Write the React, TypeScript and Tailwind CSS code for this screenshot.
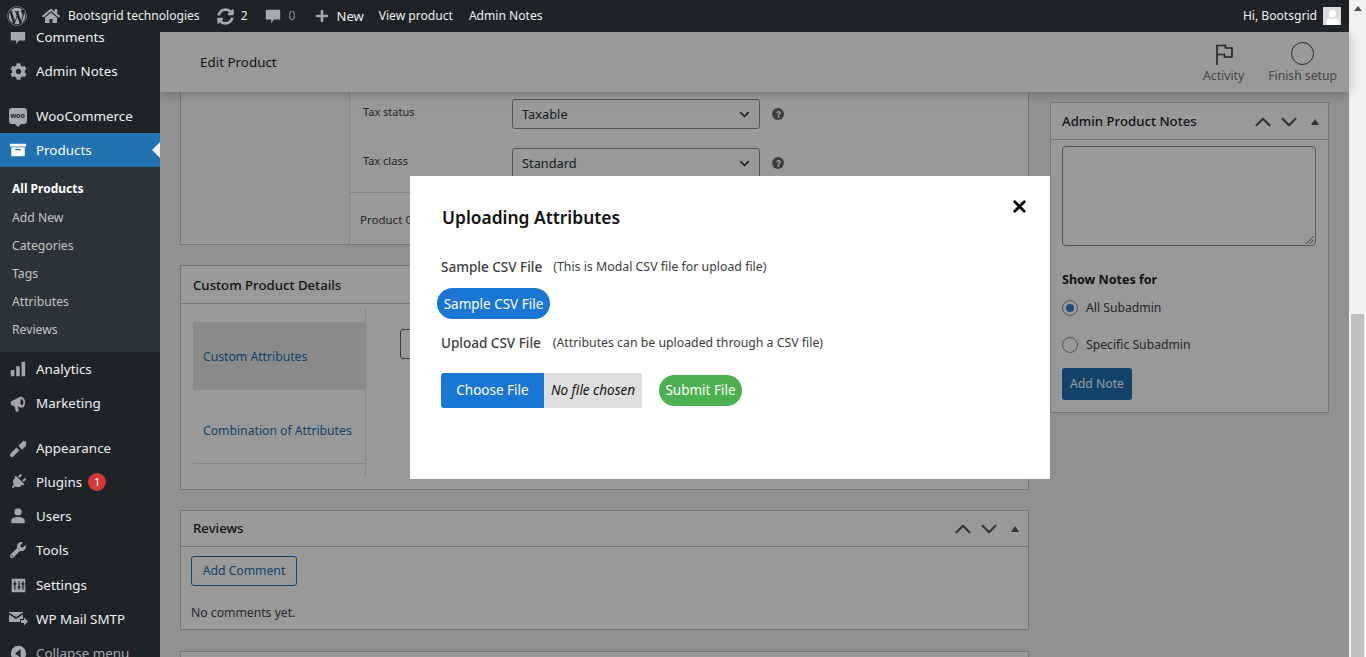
import React from "react";
import { FaWordpress, FaHome, FaSyncAlt, FaPlus, FaCog, FaPlug, FaUser, FaWrench, FaQuestion } from "react-icons/fa";
import { ChevronUp, ChevronDown, ChevronDown as SelectArrow, X } from "lucide-react";

const CommentIcon = ({ c = "w-[18px] h-[18px]" }: { c?: string }) => (
  <svg viewBox="0 0 20 20" className={c} fill="currentColor"><path d="M3 3h14c.6 0 1 .4 1 1v9c0 .6-.4 1-1 1h-6l-3 4v-4H3c-.6 0-1-.4-1-1V4c0-.6.4-1 1-1z" /></svg>
);

const Row = ({ icon, label, extra }: { icon: React.ReactNode; label: string; extra?: React.ReactNode }) => (
  <div className="h-[34px] flex items-center text-[#f0f0f1] shrink-0">
    <span className="w-9 flex justify-center text-[#a3a7ab] shrink-0">{icon}</span>
    <span>{label}</span>
    {extra}
  </div>
);

const BoxControls = () => (
  <div className="flex items-center text-[#50575e]">
    <ChevronUp size={26} strokeWidth={1.9} />
    <ChevronDown size={26} strokeWidth={1.9} />
    <span className="w-0 h-0 border-x-[4px] border-x-transparent border-b-[6px] border-b-[#50575e] ml-[9px]" />
  </div>
);

const SelectBox = ({ value }: { value: string }) => (
  <div className="w-[248px] h-[30px] border border-[#8c8f94] rounded-[3px] bg-white flex items-center justify-between pl-[9px] pr-[7px] text-[12.8px] text-[#2c3338]">
    <span className="pt-[1px]">{value}</span>
    <SelectArrow size={15} strokeWidth={2.4} className="text-[#2c3338]" />
  </div>
);

const Help = () => (
  <span className="w-3 h-3 rounded-full bg-[#666] text-white flex items-center justify-center ml-3">
    <FaQuestion size={7} />
  </span>
);

export default function App() {
  return (
    <div className="flex h-[657px] w-full overflow-hidden font-['Noto_Sans',sans-serif] text-[12.2px] bg-[#f1f1f1]">
      <div className="w-[1349px] shrink-0 flex flex-col">
        {/* admin bar */}
        <div className="h-8 shrink-0 bg-[#1d2327] text-[#f0f0f1] flex items-center relative z-30 text-[12.1px]">
          <span className="w-[34px] flex justify-center text-[#a7aaad]"><FaWordpress size={20} /></span>
          <span className="w-[34px] flex justify-center text-[#a7aaad]"><FaHome size={18} /></span>
          <span className="pt-[1px]">Bootsgrid technologies</span>
          <span className="ml-[17px] text-[#a7aaad]"><FaSyncAlt size={17} /></span>
          <span className="ml-[7px] pt-[1px]">2</span>
          <span className="ml-[16px] text-[#a7aaad]"><CommentIcon /></span>
          <span className="ml-[7px] pt-[1px] text-[#8c8f94]">0</span>
          <span className="ml-[19px] text-[#a7aaad]"><FaPlus size={14} /></span>
          <span className="ml-[8px] pt-[1px] text-[13px]">New</span>
          <span className="ml-[15px] pt-[1px]">View product</span>
          <span className="ml-[16px] pt-[1px]">Admin Notes</span>
          <span className="ml-auto pt-[1px]">Hi, Bootsgrid</span>
          <span className="ml-[6px] mr-[8px] w-[18px] h-[18px] bg-[#dcdcde] flex items-end justify-center overflow-hidden text-white">
            <FaUser size={15} />
          </span>
        </div>

        <div className="flex flex-1 min-h-0">
          {/* sidebar */}
          <div className="w-40 shrink-0 bg-[#1d2327] overflow-hidden text-[13.4px] relative z-30">
            <div className="-mt-[12px]">
              <Row icon={<CommentIcon />} label="Comments" />
              <Row icon={<FaCog size={17} />} label="Admin Notes" />
              <div className="h-[11px]" />
              <Row
                icon={
                  <span className="relative -ml-[1px] w-[18px] h-[16px] rounded-[3px] bg-[#a7aaad] text-[#1d2327] text-[7px] font-bold flex items-center justify-center">
                    woo
                    <span className="absolute left-[6px] -bottom-[3px] w-0 h-0 border-x-[3px] border-x-transparent border-t-[3px] border-t-[#a7aaad]" />
                  </span>
                }
                label="WooCommerce"
              />
              <div className="h-[34px] bg-[#2271b1] flex items-center text-white relative">
                <span className="w-9 flex justify-center">
                  <svg viewBox="0 0 20 20" className="w-[18px] h-[18px]" fill="currentColor"><path d="M1 3h18v3H1zM2.5 7h15v10h-15zM7 9v1.200h6V9z" fillRule="evenodd" /></svg>
                </span>
                <span>Products</span>
                <span className="absolute right-0 top-[9px] w-0 h-0 border-y-[8px] border-y-transparent border-r-[8px] border-r-[#f0f0f1]" />
              </div>
              <div className="bg-[#2c3338] h-[185px] pt-[7px] pl-3 text-[12.2px] text-[#c3c4c7]">
                <div className="h-[30px] flex items-center font-bold text-[12px] text-white">All Products</div>
                <div className="h-[28px] flex items-center">Add New</div>
                <div className="h-[28px] flex items-center">Categories</div>
                <div className="h-[28px] flex items-center">Tags</div>
                <div className="h-[28px] flex items-center">Attributes</div>
                <div className="h-[28px] flex items-center">Reviews</div>
              </div>
              <Row
                icon={
                  <svg viewBox="0 0 20 20" className="w-[18px] h-[18px]" fill="currentColor"><path d="M2 11h4v7H2zM8 7h4v11H8zM14 2h4v16h-4z" /></svg>
                }
                label="Analytics"
              />
              <Row
                icon={
                  <svg viewBox="0 0 20 20" className="w-[19px] h-[19px]" fill="currentColor" fillRule="evenodd"><path d="M2 8l10-5c2-1 5 2 5 6s-2.500 6-4.500 5.500L9 13l1.500 5-3 1-2-6.500-2.500-.5c-1 0-1.500-3.500-1-4zM13.500 5.500c-1 0-1.500 1.500-1.500 3.200s.5 3 1.500 3 1.700-1.300 1.700-3-.7-3.200-1.700-3.200z" /></svg>
                }
                label="Marketing"
              />
              <div className="h-[11px]" />
              <Row
                icon={
                  <svg viewBox="0 0 20 20" className="w-[19px] h-[19px]" fill="currentColor"><path d="M10 7l5.500-5.500 1 1.500 1-1 1 3-1 1 .5 1-4.500 4.500zM8 9l3 3-6.500 6.500a2 2 0 0 1-3-3z" /></svg>
                }
                label="Appearance"
              />
              <Row
                icon={<FaPlug size={16} className="rotate-45" />}
                label="Plugins"
                extra={<span className="ml-[6px] w-[18px] h-[18px] rounded-full bg-[#d63638] text-white text-[11px] flex items-center justify-center">1</span>}
              />
              <Row
                icon={
                  <svg viewBox="0 0 20 20" className="w-[18px] h-[18px]" fill="currentColor"><circle cx="10" cy="5.500" r="4" /><path d="M2.500 18v-3c0-2.500 3.500-4 7.500-4s7.500 1.500 7.500 4v3z" /></svg>
                }
                label="Users"
              />
              <Row icon={<FaWrench size={16} />} label="Tools" />
              <div className="h-[1px]" />
              <Row
                icon={
                  <svg viewBox="0 0 20 20" className="w-[17px] h-[17px]" fillRule="evenodd" fill="currentColor"><path d="M2 2h16v16H2zM5 5v2H4v2h1v6h1.400V9h1V7h-1V5zM10 5v6H9v2h1v2h1.400v-2h1v-2h-1V5zM14.500 5v2h-1v2h1v6H16V9h1V7h-1V5z" /></svg>
                }
                label="Settings"
              />
              <Row
                icon={
                  <svg viewBox="0 0 20 20" className="w-[20px] h-[20px]" fill="currentColor"><path d="M1 3h14v.8L8 8 1 3.800zM1 5.500 8 10l7-4.400V10h-3v3H1zM13 11h3V8.500l4 4-4 4V14h-3z" /></svg>
                }
                label="WP Mail SMTP"
              />
              <div className="h-[34px] flex items-center text-[#a7aaad] shrink-0">
                <span className="w-9 flex justify-center">
                  <svg viewBox="0 0 20 20" className="w-[17px] h-[17px]" fill="currentColor" fillRule="evenodd"><path d="M10 1a9 9 0 1 1 0 18 9 9 0 0 1 0-18zM12.500 5 6 10l6.500 5z" /></svg>
                </span>
                <span>Collapse menu</span>
              </div>
            </div>
          </div>

          {/* main */}
          <div className="flex-1 min-w-0 flex flex-col relative bg-[#f0f0f1]">
            <div className="h-[60px] shrink-0 bg-white flex items-center justify-between pl-[40px] pr-[12px] shadow-[0_2px_10px_rgba(0,0,0,0.25)] relative z-10">
              <span className="text-[13.4px] text-[#1e1e1e]">Edit Product</span>
              <div className="flex items-center gap-[24px] pt-[4px] text-[12.2px] text-[#757575]">
                <div className="flex flex-col items-center">
                  <svg viewBox="0 0 24 24" className="w-6 h-6 text-[#3c434a]" fill="none" stroke="currentColor" strokeWidth="1.7"><path d="M5 23V3.500h8.500V6H20v9h-7.500v-2.500H5" /></svg>
                  <span className="mt-[1px]">Activity</span>
                </div>
                <div className="flex flex-col items-center">
                  <span className="w-[23px] h-[23px] rounded-full border-[1.5px] border-[#3c434a]" />
                  <span className="mt-[2px]">Finish setup</span>
                </div>
              </div>
            </div>

            <div className="flex-1 min-h-0 overflow-hidden flex gap-[21px] pl-[20px] pr-[20px] text-[#3c434a]">
              {/* left column */}
              <div className="w-[849px] shrink-0 flex flex-col">
                <div className="h-[153px] shrink-0 bg-white border border-t-0 border-[#c3c4c7] flex overflow-hidden">
                  <div className="w-[169px] shrink-0 bg-[#fafafa] border-r border-[#dfdfdf]" />
                  <div className="flex-1">
                    <div className="h-[100px] pl-[13px] pt-[7px]">
                      <div className="flex">
                        <span className="w-[149px] text-[11px] leading-[26px]">Tax status</span>
                        <div className="flex items-center"><SelectBox value="Taxable" /><Help /></div>
                      </div>
                      <div className="flex mt-[19px]">
                        <span className="w-[149px] text-[11px] leading-[26px]">Tax class</span>
                        <div className="flex items-center"><SelectBox value="Standard" /><Help /></div>
                      </div>
                    </div>
                    <div className="border-t border-[#dfdfdf] pl-[10px] pt-[18px] text-[11.5px]">Product C</div>
                  </div>
                </div>

                <div className="mt-5 h-[225px] shrink-0 bg-white border border-[#c3c4c7] flex flex-col">
                  <div className="h-[38px] shrink-0 border-b border-[#c3c4c7] flex items-center justify-between pl-3 pr-[9px] pt-[2px] text-[13.2px] font-medium text-[#1d2327]">
                    <span>Custom Product Details</span>
                    <BoxControls />
                  </div>
                  <div className="flex pl-3 pt-[5px]">
                    <div className="w-[173px] h-[168px] pt-[13px] border-r border-[#dfdfdf] text-[12.2px] text-[#2271b1]">
                      <div className="h-[68px] bg-[#e8e8e8] flex items-center pl-[10px] pt-[2px]">Custom Attributes</div>
                      <div className="h-[74px] border-b border-[#dfdfdf] flex items-center pl-[10px] pt-[9px]">Combination of Attributes</div>
                    </div>
                    <div className="ml-[34px] mt-[20px] w-[40px] h-[30px] border border-[#666] rounded-[3px]" />
                  </div>
                </div>

                <div className="mt-[20px] h-[120px] shrink-0 bg-white border border-[#c3c4c7]">
                  <div className="h-[36px] border-b border-[#c3c4c7] flex items-center justify-between pl-3 pr-[9px] pt-[1px] text-[13.2px] font-medium text-[#1d2327]">
                    <span>Reviews</span>
                    <BoxControls />
                  </div>
                  <div className="pl-[10px] pt-[9px] text-[12.2px]">
                    <div className="w-[106px] h-[30px] border border-[#2271b1] rounded-[3px] text-[#2271b1] flex items-center justify-center">Add Comment</div>
                    <div className="mt-[18px]">No comments yet.</div>
                  </div>
                </div>

                <div className="mt-[21px] h-[40px] shrink-0 bg-white border border-[#c3c4c7]" />
              </div>

              {/* right column */}
              <div className="w-[279px] shrink-0 pt-[10px]">
                <div className="h-[311px] bg-white border border-[#c3c4c7]">
                  <div className="h-[37px] border-b border-[#c3c4c7] flex items-center justify-between pl-[11px] pr-[9px] pt-[1px] text-[13.2px] font-medium text-[#1d2327]">
                    <span>Admin Product Notes</span>
                    <BoxControls />
                  </div>
                  <div className="pl-[11px] pt-[6px]">
                    <div className="w-[254px] h-[100px] border border-[#8c8f94] rounded-[4px] bg-white relative">
                      <svg viewBox="0 0 10 10" className="absolute right-[1px] bottom-[1px] w-[9px] h-[9px] text-[#555]" stroke="currentColor" strokeWidth="1"><path d="M1 10 10 1M5 10l5-5" /></svg>
                    </div>
                    <div className="mt-[25px] text-[12.5px] font-bold text-[#1d2327]">Show Notes for</div>
                    <div className="mt-[9px] h-[18px] flex items-center gap-[8px] text-[12.2px]">
                      <span className="w-4 h-4 rounded-full border border-[#8c8f94] bg-white flex items-center justify-center">
                        <span className="w-2 h-2 rounded-full bg-[#3582c4]" />
                      </span>
                      All Subadmin
                    </div>
                    <div className="mt-[19px] h-[18px] flex items-center gap-[8px] text-[12.2px]">
                      <span className="w-4 h-4 rounded-full border border-[#8c8f94] bg-white" />
                      Specific Subadmin
                    </div>
                    <div className="mt-[14px] w-[70px] h-[32px] rounded-[3px] bg-[#2271b1] text-white flex items-center justify-center text-[12.2px]">Add Note</div>
                  </div>
                </div>
              </div>
            </div>

            {/* overlay + modal */}
            <div className="absolute inset-0 z-20 bg-black/40 pl-[250px] pt-[144px]">
              <div className="w-[640px] h-[303px] bg-white relative pl-[31px] pt-[29px] text-[#333]">
                <div className="pl-[1px] text-[17.4px] font-semibold leading-[24px] text-[#111]">Uploading Attributes</div>
                <button className="absolute right-[21px] top-[21px] text-black"><X size={19} strokeWidth={3.4} /></button>
                <div className="mt-[28px] flex items-center">
                  <span className="text-[13.5px] font-medium text-[#3c3c3c]">Sample CSV File</span>
                  <span className="ml-[11px] text-[12.35px] text-[#3c3c3c]">(This is Modal CSV file for upload file)</span>
                </div>
                <div className="-ml-[4px] mt-[11px] w-[113px] h-[31px] rounded-full bg-[#1976d2] text-white text-[13.5px] flex items-center justify-center">Sample CSV File</div>
                <div className="mt-[14px] flex items-center">
                  <span className="text-[13.5px] font-medium text-[#3c3c3c]">Upload CSV File</span>
                  <span className="ml-[12px] text-[12.3px] text-[#3c3c3c]">(Attributes can be uploaded through a CSV file)</span>
                </div>
                <div className="mt-[19px] flex items-center">
                  <div className="w-[103px] h-[35px] pt-[1px] rounded-l-[3px] bg-[#1976d2] text-white text-[13.5px] flex items-center justify-center">Choose File</div>
                  <div className="w-[98px] h-[35px] pt-[1px] bg-[#dfdfdf] text-[13.5px] italic text-[#111] flex items-center justify-center">No file chosen</div>
                  <div className="ml-[17px] w-[83px] h-[31px] pt-[1px] rounded-full bg-[#4caf50] text-white text-[13.5px] flex items-center justify-center">Submit File</div>
                </div>
              </div>
            </div>
          </div>
        </div>
      </div>

      {/* scrollbar */}
      <div className="w-[17px] shrink-0 bg-[#f1f1f1] flex flex-col items-center">
        <span className="mt-[6px] w-0 h-0 border-x-[4px] border-x-transparent border-b-[5px] border-b-[#505050]" />
        <div className="mt-[303px] w-[13px] flex-1 bg-[#c1c1c1]" />
      </div>
    </div>
  );
}
